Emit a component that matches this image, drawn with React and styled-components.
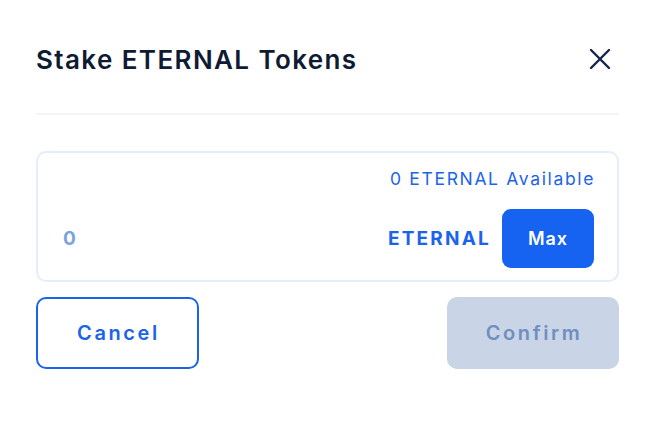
import styled, { createGlobalStyle } from "styled-components";

const GlobalStyle = createGlobalStyle`
  body {
    margin: 0;
    background: #ffffff;
    font-family: "Inter", "Noto Sans", sans-serif;
  }
`;

const Dialog = styled.div`
  width: 648px;
  height: 440px;
  box-sizing: border-box;
  padding: 36px 30px 0 36px;
  background: #ffffff;
`;

const Header = styled.div`
  display: flex;
  align-items: center;
  justify-content: space-between;
  height: 46px;
`;

const Title = styled.h2`
  margin: 0;
  font-size: 26px;
  font-weight: 600;
  color: #0f1a33;
  letter-spacing: 1.4px;
`;

const CloseButton = styled.button`
  border: none;
  background: none;
  padding: 0;
  width: 28px;
  height: 28px;
  display: flex;
  align-items: center;
  justify-content: center;
  margin-right: 4px;
  cursor: pointer;
`;

const Divider = styled.div`
  height: 2px;
  background: #f3f4f8;
  margin: 31px 0 36px 0;
  width: 583px;
`;

const AmountBox = styled.div`
  width: 583px;
  height: 131px;
  box-sizing: border-box;
  border: 2px solid #e4eefb;
  border-radius: 10px;
  padding: 14px 24px 12px 24px;
  display: flex;
  flex-direction: column;
`;

const Available = styled.div`
  align-self: flex-end;
  font-size: 17.5px;
  color: #1b63ea;
  line-height: 24px;
  letter-spacing: 1.65px;
  margin-right: -2px;
`;

const InputRow = styled.div`
  display: flex;
  align-items: center;
  margin-top: 18px;
  gap: 11px;
`;

const AmountInput = styled.div`
  flex: 1;
  font-size: 19px;
  font-weight: 700;
  color: #7ca3dc;
  padding-left: 1px;
`;

const Symbol = styled.span`
  font-size: 19px;
  font-weight: 700;
  color: #1b63ea;
  letter-spacing: 2.2px;
`;

const MaxButton = styled.button`
  width: 92px;
  height: 59px;
  border: none;
  border-radius: 9px;
  background: #1563f0;
  color: #ffffff;
  font-family: inherit;
  font-size: 18px;
  font-weight: 600;
  letter-spacing: 1px;
  margin-right: -1px;
`;

const Actions = styled.div`
  display: flex;
  justify-content: space-between;
  width: 583px;
  margin-top: 15px;
`;

const ActionButton = styled.button`
  height: 72px;
  width: ${(p) => p.$width}px;
  box-sizing: border-box;
  border-radius: 10px;
  font-family: inherit;
  font-size: 20px;
  font-weight: 600;
  letter-spacing: 2.6px;
  padding-left: 8px;
  border: ${(p) => (p.$primary ? "none" : "2px solid #1a63ea")};
  background: ${(p) => (p.$primary ? "#c9d4e6" : "#ffffff")};
  color: ${(p) => (p.$primary ? "#6f8fc0" : "#1a63ea")};
`;

const App = () => (
  <>
    <GlobalStyle />
    <Dialog>
      <Header>
        <Title>Stake ETERNAL Tokens</Title>
        <CloseButton aria-label="Close">
          <svg width="22" height="22" viewBox="0 0 22 22">
            <path
              d="M2 2 L20 20 M20 2 L2 20"
              stroke="#13244a"
              strokeWidth="2.4"
              strokeLinecap="round"
            />
          </svg>
        </CloseButton>
      </Header>
      <Divider />
      <AmountBox>
        <Available>0 ETERNAL Available</Available>
        <InputRow>
          <AmountInput>0</AmountInput>
          <Symbol>ETERNAL</Symbol>
          <MaxButton>Max</MaxButton>
        </InputRow>
      </AmountBox>
      <Actions>
        <ActionButton $width={163}>Cancel</ActionButton>
        <ActionButton $width={172} $primary disabled>
          Confirm
        </ActionButton>
      </Actions>
    </Dialog>
  </>
);

export default App;
